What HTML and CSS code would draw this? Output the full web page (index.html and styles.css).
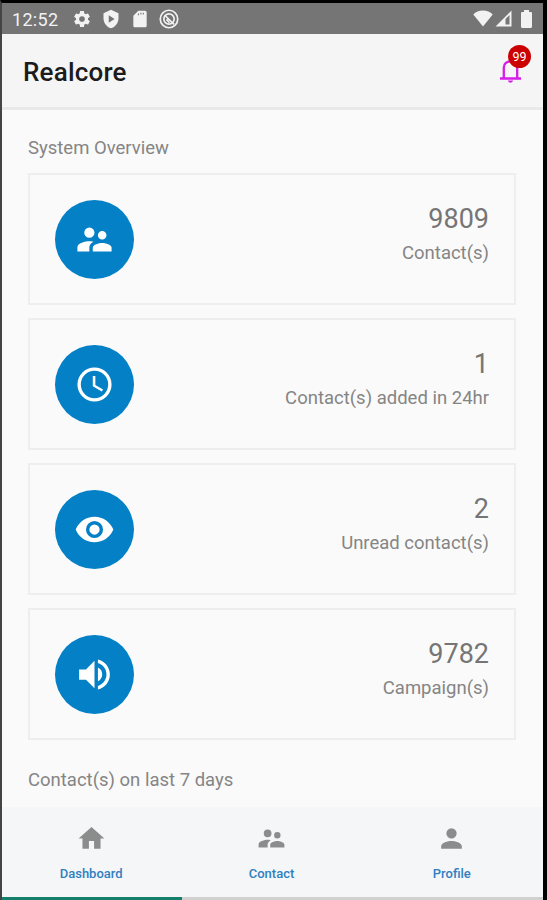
FILE: index.html
```html
<!DOCTYPE html>
<html lang="en">
<head>
    <meta charset="UTF-8">
    <meta name="viewport" content="width=device-width, initial-scale=1.0">
    <title>Realcore</title>
    <link rel="stylesheet" href="styles.css">
</head>
<body>
    <div class="screen">
        <div class="status-bar">
            <span class="time">12:52</span>
            <svg class="status-icon" viewBox="0 0 24 24"><path d="M19.14 12.94c.04-.3.06-.61.06-.94s-.02-.64-.07-.94l2.03-1.58a.5.5 0 0 0 .12-.61l-1.92-3.32a.5.5 0 0 0-.59-.22l-2.39.96a7 7 0 0 0-1.62-.94l-.36-2.54A.5.5 0 0 0 13.92 2.4h-3.84a.5.5 0 0 0-.47.41l-.36 2.54c-.59.24-1.13.57-1.62.94l-2.39-.96a.5.5 0 0 0-.59.22L2.74 8.87a.5.5 0 0 0 .12.61l2.03 1.58a6 6 0 0 0 0 1.88l-2.03 1.58a.5.5 0 0 0-.12.61l1.92 3.32c.12.22.37.29.59.22l2.39-.96c.5.38 1.03.7 1.62.94l.36 2.54c.05.24.24.41.48.41h3.84c.24 0 .44-.17.47-.41l.36-2.54a7 7 0 0 0 1.62-.94l2.39.96c.22.08.47 0 .59-.22l1.92-3.32a.5.5 0 0 0-.12-.61zM12 15.4a3.4 3.4 0 1 1 0-6.8 3.4 3.4 0 0 1 0 6.8z"/></svg>
            <svg class="status-icon" viewBox="0 0 24 24"><path fill-rule="evenodd" d="M12 1 3 5v6c0 5.55 3.84 10.74 9 12 5.16-1.26 9-6.45 9-12V5zM9.3 7.5l7 4.5-7 4.5z"/></svg>
            <svg class="status-icon" viewBox="0 0 24 24"><path fill-rule="evenodd" d="M18 2h-8L4 8v12c0 1.1.9 2 2 2h12c1.1 0 2-.9 2-2V4c0-1.1-.9-2-2-2zM9.5 5.500h1.300v2H9.500zM12.400 4.500h1.300v2h-1.300zM15.300 4.500h1.300v2h-1.300z"/></svg>
            <svg class="status-icon" viewBox="0 0 24 24"><g fill="none" stroke="#f2f2f2" stroke-width="2"><circle cx="12" cy="12" r="10.5"/><circle cx="12" cy="12" r="6.2"/><path d="M7 7.5 18 18.5M9 12.5l3.5 4"/></g></svg>
            <div class="signal">
                <svg width="20" height="17" viewBox="0 0 20 17"><path d="M10 16.5.3 4.5C2.6 2 6 .5 10 .5s7.4 1.5 9.7 4z"/></svg>
                <svg width="17" height="17" viewBox="0 0 17 17"><path fill-rule="evenodd" d="M.5 16.5 16.5.5v16zM10.5 9v5.5h4V5z"/></svg>
                <svg class="battery" width="11" height="18" viewBox="0 0 11 18"><path d="M3 0h5v2h1.8c.7 0 1.2.5 1.2 1.2v13.6c0 .7-.5 1.2-1.2 1.2H1.2C.5 18 0 17.5 0 16.8V3.2C0 2.5.5 2 1.2 2H3z"/></svg>
            </div>
        </div>

        <header>
            <h1>Realcore</h1>
            <div class="notification">
                <svg width="22" height="25" viewBox="0 0 22 25"><path fill="none" stroke="#d51ce8" stroke-width="2.3" d="M0 20.500h21M3.800 20V9.500C3.800 5.500 7 3.300 10.500 3.300s6.700 2.200 6.700 6.200V20"/><path fill="#d51ce8" d="M8 22.500h5c-.3 1.400-1.200 2.200-2.500 2.200s-2.200-.8-2.500-2.200z"/></svg>
                <span class="badge">99</span>
            </div>
        </header>

        <main>
            <h2>System Overview</h2>
            <div class="card">
                <div class="circle">
                    <svg viewBox="0 0 24 24"><path d="M16.5 12a2.5 2.5 0 1 0 0-5 2.5 2.5 0 0 0 0 5zM9 11a3 3 0 1 0 0-6 3 3 0 0 0 0 6zm7.5 3c-1.83 0-5.5.92-5.5 2.75V19h11v-2.25c0-1.83-3.67-2.75-5.5-2.75zM9 13c-2.33 0-7 1.17-7 3.5V19h7v-2.25c0-.85.33-2.34 2.37-3.47C10.5 13.1 9.66 13 9 13z"/></svg>
                </div>
                <div class="info">
                    <span class="number">9809</span>
                    <span class="label">Contact(s)</span>
                </div>
            </div>
            <div class="card">
                <div class="circle">
                    <svg viewBox="0 0 24 24"><path d="M12 2a10 10 0 1 0 0 20 10 10 0 0 0 0-20zm0 18a8 8 0 1 1 0-16 8 8 0 0 1 0 16zm.5-13H11v6l5.25 3.15.75-1.23-4.5-2.67z"/></svg>
                </div>
                <div class="info">
                    <span class="number">1</span>
                    <span class="label">Contact(s) added in 24hr</span>
                </div>
            </div>
            <div class="card">
                <div class="circle">
                    <svg viewBox="0 0 24 24"><path d="M12 4.5C7 4.5 2.73 7.61 1 12c1.73 4.39 6 7.5 11 7.5s9.27-3.11 11-7.5c-1.73-4.39-6-7.5-11-7.5zM12 17a5 5 0 1 1 0-10 5 5 0 0 1 0 10zm0-8a3 3 0 1 0 0 6 3 3 0 0 0 0-6z"/></svg>
                </div>
                <div class="info">
                    <span class="number">2</span>
                    <span class="label">Unread contact(s)</span>
                </div>
            </div>
            <div class="card">
                <div class="circle">
                    <svg viewBox="0 0 24 24"><path d="M3 9v6h4l5 5V4L7 9zm13.5 3A4.5 4.5 0 0 0 14 7.97v8.05c1.48-.73 2.5-2.25 2.5-4.02zM14 3.23v2.06c2.89.86 5 3.54 5 6.71s-2.11 5.85-5 6.71v2.06c4.01-.91 7-4.49 7-8.77s-2.99-7.86-7-8.77z"/></svg>
                </div>
                <div class="info">
                    <span class="number">9782</span>
                    <span class="label">Campaign(s)</span>
                </div>
            </div>
            <h2 class="last-days">Contact(s) on last 7 days</h2>
        </main>

        <nav>
            <a class="active">
                <svg viewBox="0 0 24 24"><path d="M10 20v-6h4v6h5v-8h3L12 3 2 12h3v8z"/></svg>
                <span>Dashboard</span>
            </a>
            <a>
                <svg viewBox="0 0 24 24"><path d="M16.5 12a2.5 2.5 0 1 0 0-5 2.5 2.5 0 0 0 0 5zM9 11a3 3 0 1 0 0-6 3 3 0 0 0 0 6zm7.5 3c-1.83 0-5.5.92-5.5 2.75V19h11v-2.25c0-1.83-3.67-2.75-5.5-2.75zM9 13c-2.33 0-7 1.17-7 3.5V19h7v-2.25c0-.85.33-2.34 2.37-3.47C10.5 13.1 9.66 13 9 13z"/></svg>
                <span>Contact</span>
            </a>
            <a>
                <svg viewBox="0 0 24 24"><path d="M12 12a4 4 0 1 0 0-8 4 4 0 0 0 0 8zm0 2c-2.67 0-8 1.34-8 4v2h16v-2c0-2.66-5.33-4-8-4z"/></svg>
                <span>Profile</span>
            </a>
        </nav>
    </div>
</body>
</html>
```
FILE: styles.css
```css
body {
    margin: 0;
    background-color: #000;
    font-family: Roboto, sans-serif;
}

.screen {
    display: flex;
    flex-direction: column;
    height: 900px;
    box-sizing: border-box;
    border: solid #000;
    border-width: 3px 4px 0 2px;
    border-left-color: #444;
    background-color: #fafafa;
    overflow: hidden;
}

.status-bar {
    display: flex;
    align-items: center;
    height: 31px;
    flex-shrink: 0;
    padding: 0 10px;
    background-color: #757575;
    color: #f2f2f2;
}

.status-bar svg {
    fill: #f2f2f2;
}

.time {
    width: 60px;
    font-size: 18px;
    line-height: 33px;
    letter-spacing: 0.3px;
    padding-top: 1px;
}

.status-icon {
    width: 20px;
    height: 20px;
    margin-right: 9px;
}

.signal {
    display: flex;
    align-items: center;
    gap: 2px;
    margin-left: auto;
}

.signal .battery {
    margin-left: 7px;
    margin-right: 1px;
}

header {
    display: flex;
    justify-content: space-between;
    height: 73px;
    flex-shrink: 0;
    padding: 0 21px;
    background-color: #f5f5f5;
    border-bottom: 3px solid #e9e9e9;
}

h1 {
    margin: 0;
    font-size: 26px;
    line-height: 77px;
    font-weight: 500;
    letter-spacing: 0.2px;
    color: #1c1c1c;
}

.notification {
    position: relative;
    padding-top: 24px;
}

.badge {
    position: absolute;
    top: 11px;
    left: 8px;
    width: 23px;
    height: 23px;
    border-radius: 50%;
    background-color: #cc0000;
    color: #fff;
    font-size: 12.5px;
    line-height: 24px;
    text-align: center;
}

main {
    flex: 1;
    padding: 0 27px 0 26px;
}

h2 {
    margin: 0;
    padding-top: 24px;
    height: 39px;
    font-size: 18.5px;
    line-height: 28px;
    font-weight: 400;
    color: #858585;
}

.card {
    display: flex;
    justify-content: space-between;
    height: 132px;
    box-sizing: border-box;
    margin-bottom: 13px;
    padding: 24.5px 25px 24px 24.5px;
    border: 2px solid #eeeeee;
}

.circle {
    display: flex;
    align-items: center;
    justify-content: center;
    width: 79px;
    height: 79px;
    border-radius: 50%;
    background-color: #0380c6;
}

.circle svg {
    width: 41px;
    height: 41px;
    fill: #fff;
}

.info {
    display: flex;
    flex-direction: column;
    padding-top: 1px;
    text-align: right;
    color: #858585;
}

.number {
    font-size: 27px;
    line-height: 36px;
    color: #757575;
}

.label {
    font-size: 18.5px;
    line-height: 33px;
}

.last-days {
    padding-top: 13px;
}

nav {
    display: flex;
    height: 93px;
    flex-shrink: 0;
    background-color: #f4f6f8;
}

nav a {
    display: flex;
    flex: 1;
    flex-direction: column;
    align-items: center;
    padding-top: 16px;
    padding-right: 2px;
    box-sizing: border-box;
    border-bottom: 3px solid #d0d0d0;
    font-size: 13px;
    font-weight: 500;
    color: #3080c0;
}

nav a.active {
    border-bottom-color: #14806c;
}

nav svg {
    width: 31px;
    height: 31px;
    margin-bottom: 12px;
    fill: #8b8d8d;
}
```
